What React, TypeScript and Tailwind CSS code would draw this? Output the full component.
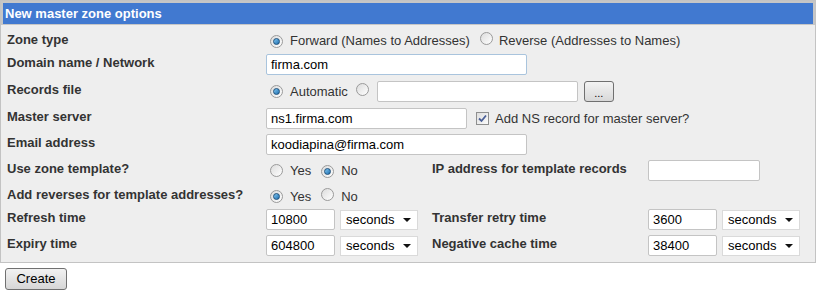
import React from "react";

const font = { fontFamily: '"Liberation Sans", Arial, sans-serif' };

function Radio({ checked }: { checked?: boolean }) {
  return (
    <span className="relative inline-flex h-[13px] w-[13px] shrink-0 items-center justify-center rounded-full border border-[#9a9a9a] bg-gradient-to-br from-[#dcdcdc] to-[#ffffff]">
      {checked && (
        <span className="h-[7px] w-[7px] rounded-full border border-[#1d4f7a] bg-gradient-to-br from-[#7fc6f0] to-[#1a6fb0]" />
      )}
    </span>
  );
}

function Checkbox() {
  return (
    <span className="inline-flex h-[13px] w-[13px] shrink-0 items-center justify-center border border-[#8e8f8f] bg-gradient-to-br from-[#dedede] to-[#fbfbfb]">
      <svg width="9" height="9" viewBox="0 0 9 9">
        <path d="M1 4.5 L3.5 7 L8 1.5" fill="none" stroke="#4a5f97" strokeWidth="1.8" />
      </svg>
    </span>
  );
}

function TextBox({ value, w, blue }: { value?: string; w: number; blue?: boolean }) {
  return (
    <div
      className={
        "flex h-[21px] items-center rounded-[2px] border bg-white px-[4px] text-[13px] text-black " +
        (blue ? "border-[#a9c4dd]" : "border-[#c4c4c4]")
      }
      style={{ width: w }}
    >
      {value}
    </div>
  );
}

function Select() {
  return (
    <div className="ml-[5px] flex h-[20px] w-[78px] items-center justify-between border border-[#dadada] bg-white pl-[5px] pr-[6px] text-[13px] text-black">
      <span>seconds</span>
      <svg width="8" height="4" viewBox="0 0 8 4">
        <path d="M0 0 L8 0 L4 4 Z" fill="#111" />
      </svg>
    </div>
  );
}

function Label({ children }: { children: React.ReactNode }) {
  return <div className="pb-[3px] text-[13px] font-bold text-[#333]">{children}</div>;
}

export default function App() {
  return (
    <div className="bg-white" style={font}>
      <div className="w-[816px] border border-[#c3c3c3] bg-[#eeeeee]">
        {/* header */}
        <div className="border-[2px] border-b-[1px] border-[#c6c6c6] bg-[#c6c6c6]">
          <div className="flex h-[21px] items-center bg-[#4179d0] pl-[2px] text-[13px] font-bold text-white">
            New master zone options
          </div>
        </div>

        <div className="grid grid-cols-[259px_166px_216px_1fr] pb-[6px] pl-[6px] text-[13px] text-[#333]">
          {/* Zone type */}
          <div className="mt-[5px] flex h-[22px] items-center"><Label>Zone type</Label></div>
          <div className="col-span-3 mt-[5px] flex h-[22px] items-center pl-[4px]">
            <Radio checked />
            <span className="ml-[7px]">Forward (Names to Addresses)</span>
            <span className="ml-[10px]"><Radio /></span>
            <span className="ml-[6px]">Reverse (Addresses to Names)</span>
          </div>

          {/* Domain */}
          <div className="mt-[2px] flex h-[21px] items-center"><Label>Domain name / Network</Label></div>
          <div className="col-span-3 mt-[2px] flex h-[21px] items-center">
            <TextBox value="firma.com" w={261} blue />
          </div>

          {/* Records file */}
          <div className="mt-[6px] flex h-[21px] items-center"><Label>Records file</Label></div>
          <div className="col-span-3 mt-[6px] flex h-[21px] items-center pl-[4px]">
            <Radio checked />
            <span className="ml-[7px]">Automatic</span>
            <span className="ml-[8px]"><Radio /></span>
            <div className="ml-[8px]"><TextBox w={201} /></div>
            <div className="ml-[6px] flex h-[21px] w-[30px] items-center justify-center rounded-[3px] border border-[#707070] bg-gradient-to-b from-[#f3f3f3] to-[#d8d8d8] pt-[3px] text-[11px] text-black">
              ...
            </div>
          </div>

          {/* Master server */}
          <div className="mt-[6px] flex h-[21px] items-center"><Label>Master server</Label></div>
          <div className="col-span-3 mt-[6px] flex h-[21px] items-center">
            <TextBox value="ns1.firma.com" w={201} />
            <span className="ml-[9px]"><Checkbox /></span>
            <span className="ml-[6px]">Add NS record for master server?</span>
          </div>

          {/* Email */}
          <div className="mt-[5px] flex h-[21px] items-center"><Label>Email address</Label></div>
          <div className="col-span-3 mt-[5px] flex h-[21px] items-center">
            <TextBox value="koodiapina@firma.com" w={261} />
          </div>

          {/* Use zone template */}
          <div className="mt-[5px] flex h-[21px] items-center"><Label>Use zone template?</Label></div>
          <div className="mt-[5px] flex h-[21px] items-center pl-[4px]">
            <Radio />
            <span className="ml-[7px]">Yes</span>
            <span className="ml-[10px]"><Radio checked /></span>
            <span className="ml-[7px]">No</span>
          </div>
          <div className="mt-[5px] flex h-[21px] items-center"><Label>IP address for template records</Label></div>
          <div className="mt-[5px] flex h-[21px] items-center">
            <TextBox w={112} />
          </div>

          {/* Add reverses */}
          <div className="mt-[5px] flex h-[21px] items-center"><Label>Add reverses for template addresses?</Label></div>
          <div className="col-span-3 mt-[5px] flex h-[21px] items-center pl-[4px]">
            <Radio checked />
            <span className="ml-[7px]">Yes</span>
            <span className="ml-[10px]"><Radio /></span>
            <span className="ml-[7px]">No</span>
          </div>

          {/* Refresh / Transfer */}
          <div className="mt-[2px] flex h-[21px] items-center"><Label>Refresh time</Label></div>
          <div className="mt-[2px] flex h-[21px] items-center">
            <TextBox value="10800" w={69} />
            <Select />
          </div>
          <div className="mt-[2px] flex h-[21px] items-center"><Label>Transfer retry time</Label></div>
          <div className="mt-[2px] flex h-[21px] items-center">
            <TextBox value="3600" w={69} />
            <Select />
          </div>

          {/* Expiry / Negative */}
          <div className="mt-[5px] flex h-[21px] items-center"><Label>Expiry time</Label></div>
          <div className="mt-[5px] flex h-[21px] items-center">
            <TextBox value="604800" w={69} />
            <Select />
          </div>
          <div className="mt-[5px] flex h-[21px] items-center"><Label>Negative cache time</Label></div>
          <div className="mt-[5px] flex h-[21px] items-center">
            <TextBox value="38400" w={69} />
            <Select />
          </div>
        </div>
      </div>

      <div className="px-[5px] pt-[3px]">
        <button className="h-[22px] w-[62px] rounded-[3px] border border-[#707070] bg-gradient-to-b from-[#f2f2f2] to-[#d6d6d6] text-[13px] text-black">
          Create
        </button>
      </div>
    </div>
  );
}
